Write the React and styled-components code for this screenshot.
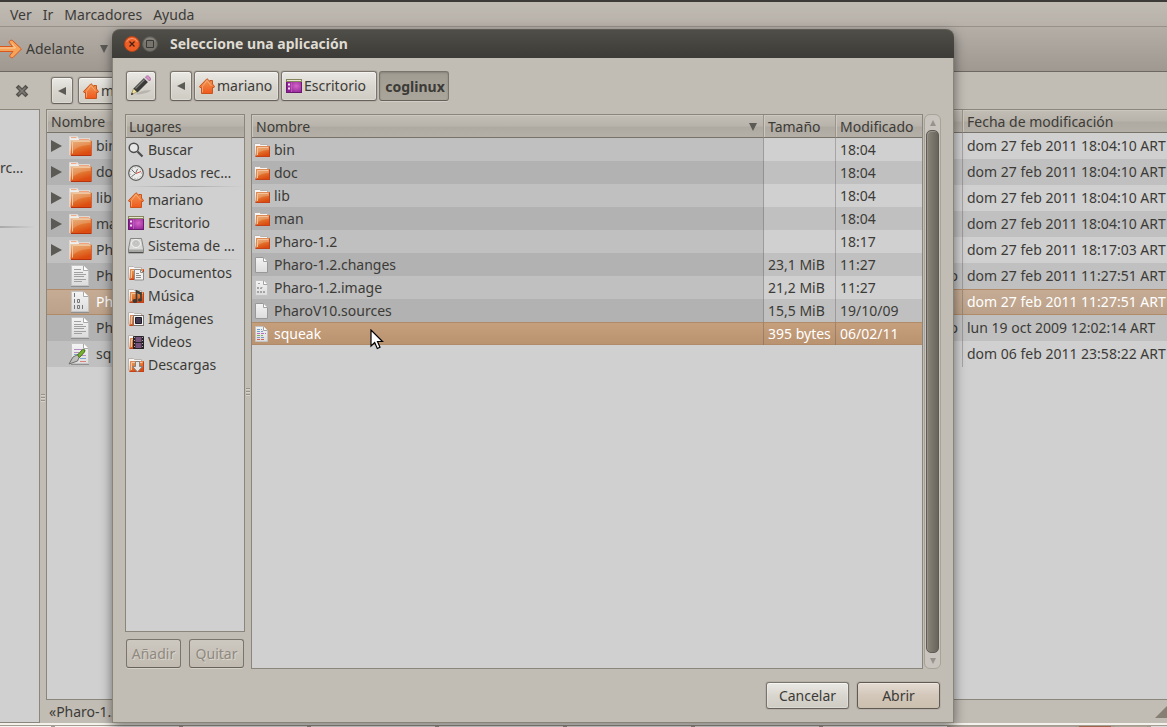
import React from "react";
import styled, { createGlobalStyle, css } from "styled-components";

const ink = "#3c3b37";
const sand = "#c1bcb4";
const frame = "#8b867b";

const Global = createGlobalStyle`
  *, *::before, *::after { box-sizing: border-box; }
  html, body { margin: 0; background: ${sand}; }
  body, button { font-family: "Noto Sans", "Open Sans", sans-serif; font-size: 14px; line-height: 20px; color: ${ink}; }
  button { margin: 0; padding: 0; border: 0; background: none; }
  svg { display: block; flex: none; }
`;

/* ---------- layout of the file manager behind ---------- */
const Desktop = styled.div`
  position: relative;
  display: flex;
  flex-direction: column;
  min-height: 100vh;
  overflow: hidden;
  background: ${sand};
`;
const MenuBar = styled.nav`
  display: flex;
  gap: 11px;
  height: 27px;
  padding: 3px 10px 0;
  border-top: 2px solid #3c3b37;
  border-bottom: 1px solid #98918a;
  background: linear-gradient(#c0bbb3, #b7b1aa);
`;
const MenuItem = styled.button`
  height: 20px;
`;
const Toolbar = styled.div`
  display: flex;
  align-items: center;
  gap: 6px;
  height: 45px;
  border-bottom: 1px solid #6e6862;
  background: linear-gradient(#b4aea7, #9f9891);
`;
const ToolButton = styled.button`
  display: flex;
  align-items: center;
  gap: 4px;
`;
const DropButton = styled.button`
  padding-left: 9px;
`;
const Location = styled.div`
  display: flex;
  align-items: center;
  gap: 5px;
  height: 37px;
  padding-left: 15px;
`;
const CloseSide = styled.button`
  margin-right: 17px;
`;
const Workspace = styled.div`
  display: flex;
  flex: 1;
`;
const SidePanel = styled.div`
  width: 40px;
  padding-top: 48px;
  border-top: 1px solid ${frame};
  border-right: 1px solid ${frame};
  border-bottom: 1px solid ${frame};
  background: #d0d0d0;
`;
const SideRule = styled.hr`
  height: 2px;
  margin: 48px 4px 0 0;
  border: 0;
  background: linear-gradient(90deg, #a9a9a9, #d0d0d0);
`;
const Grip = styled.div`
  display: flex;
  align-items: center;
  justify-content: center;
  width: 6px;
  padding-bottom: ${(p) => p.$lift || 0}px;
`;
const Main = styled.div`
  display: flex;
  flex: 1;
  flex-direction: column;
  min-width: 0;
`;
const ListFrame = styled.div`
  flex: 1;
  min-width: 0;
  border: 1px solid ${frame};
  border-right-width: ${(p) => (p.$open ? 0 : 1)}px;
  background: #d0d0d0;
`;
const StatusBar = styled.div`
  display: flex;
  align-items: center;
  justify-content: space-between;
  height: 23px;
  padding-left: 3px;
`;
const TaskBar = styled.div`
  display: flex;
  gap: 4px;
  height: 4px;
  border-top: 2px solid #f4f1ec;
  background: #a39c90;
`;
const Task = styled.div`
  flex: none;
  width: ${(p) => p.$w || 124}px;
  margin-top: 1px;
  background: ${(p) => p.$c || "#f7f5f2"};
`;

/* ---------- tables ---------- */
const Table = styled.table`
  width: 100%;
  table-layout: fixed;
  border-spacing: 0;
`;
const Col = styled.col`
  width: ${(p) => p.$w}px;
`;
const Th = styled.th`
  height: 23px;
  padding: 2px 4px 0;
  border-bottom: 1px solid #77726a;
  border-right: 1px solid #9a948a;
  background: linear-gradient(#c2bdb5, #b9b4ab 50%, #aea9a1 55%, #b5b0a7);
  box-shadow: inset 1px 1px 0 #ccc7bf;
  font-weight: normal;
  line-height: 20px;
  text-align: left;
  white-space: nowrap;
  &:last-child { border-right: 0; }
`;
const HeadLine = styled.span`
  display: flex;
  align-items: center;
  justify-content: space-between;
  padding-right: 2px;
`;
const Td = styled.td`
  height: ${(p) => p.$h}px;
  padding: 0 4px;
  border-right: 1px solid rgba(90, 86, 80, 0.35);
  line-height: 20px;
  text-align: ${(p) => p.$align || "left"};
  white-space: nowrap;
  background: #d0d0d0;
  &:last-child { border-right: 0; }
`;
const Tr = styled.tr`
  &:nth-child(even) ${Td} { background: #c0c0c0; }
  & ${Td}:first-child { padding-left: 2px; background: #c0c0c0; }
  &:nth-child(even) ${Td}:first-child { background: #b2b2b2; }
  ${(p) =>
    p.$on &&
    css`
      && ${Td}, &&:nth-child(even) ${Td}, && ${Td}:first-child {
        color: #fff;
        background: ${p.$dim
          ? "linear-gradient(#c6ac95, #bba189)"
          : "linear-gradient(#c69f7d, #b99270)"};
        box-shadow: inset 0 1px 0 #b08b69, inset 0 -1px 0 #b08b69;
      }
    `}
`;
const FileName = styled.span`
  display: flex;
  align-items: center;
  gap: 4px;
`;
const Expander = styled.span`
  display: flex;
  flex: none;
  justify-content: center;
  width: 15px;
`;

/* ---------- dialog ---------- */
const Dialog = styled.section`
  position: absolute;
  top: 29px;
  right: 213px;
  bottom: 4px;
  left: 112px;
  display: flex;
  flex-direction: column;
  border: 1px solid #8a8377;
  border-top: 0;
  border-radius: 8px 8px 0 0;
  background: ${sand};
  box-shadow: 0 4px 12px rgba(0, 0, 0, 0.5);
`;
const TitleBar = styled.header`
  display: flex;
  align-items: center;
  gap: 2px;
  height: 29px;
  margin: 0 -1px;
  padding-left: 12px;
  border-top: 1px solid #5d5b54;
  border-radius: 8px 8px 0 0;
  background: linear-gradient(#504e48, #3c3b37);
`;
const Title = styled.h1`
  margin: 0 0 0 10px;
  color: #dfdbd2;
  font-size: 14px;
  line-height: 20px;
`;
const DialogBody = styled.div`
  display: flex;
  flex: 1;
  flex-direction: column;
  gap: 13px;
  padding: 13px 12px;
`;
const PathBar = styled.div`
  display: flex;
  gap: 2px;
  height: 30px;
`;
const Button = styled.button`
  display: flex;
  align-items: center;
  justify-content: center;
  gap: 2px;
  flex: none;
  width: ${(p) => p.$w}px;
  height: ${(p) => p.$h || 30}px;
  border: 1px solid #7a756c;
  border-bottom-color: #66625a;
  border-radius: 3px;
  background: linear-gradient(#ebe9e5, #d9d6cf 50%, #cfccc4);
  box-shadow: inset 0 1px 0 #f5f4f1, inset 0 0 0 1px rgba(255, 255, 255, 0.25), 0 0 0 1px rgba(140, 132, 120, 0.2);
  white-space: nowrap;
  ${(p) =>
    p.$crumb &&
    css`
      justify-content: flex-start;
      padding-left: 4px;
    `}
  ${(p) =>
    p.$pressed &&
    css`
      padding: 2px 0 0 2px;
      font-weight: bold;
      background: linear-gradient(#a19c92, #aba69c);
      box-shadow: inset 0 1px 2px #87827a, 0 1px 0 #d2cdc6;
    `}
  ${(p) =>
    p.$suggested &&
    css`
      background: linear-gradient(#e4dbd2, #d3c7ba 50%, #cbbfae);
      border-color: #5f5a52;
      box-shadow: inset 0 1px 0 #eee7df, 0 0 0 1px rgba(140, 132, 120, 0.2);
    `}
  &:disabled {
    color: #8f897f;
    background: linear-gradient(#cdc8c0, #c1bbb1);
    box-shadow: 0 1px 0 #d5d0c9;
    text-shadow: 1px 1px 0 #dad6cf;
  }
`;
const PencilSlot = styled.div`
  margin: 0 12px 0 1px;
`;
const Panes = styled.div`
  display: flex;
  flex: 1;
`;
const PlacesColumn = styled.div`
  display: flex;
  flex-direction: column;
  width: 120px;
`;
const PlacesFrame = styled.div`
  flex: 1;
  border: 1px solid ${frame};
  background: #d0d0d0;
`;
const PlacesHead = styled.div`
  height: 23px;
  padding: 2px 3px 0;
  border-bottom: 1px solid #77726a;
  background: linear-gradient(#c2bdb5, #b9b4ab 50%, #aea9a1 55%, #b5b0a7);
  box-shadow: inset 1px 1px 0 #ccc7bf;
`;
const PlaceList = styled.ul`
  margin: 0;
  padding: 0;
  list-style: none;
`;
const PlaceItem = styled.li`
  border-top: ${(p) => (p.$group ? "4px solid transparent" : "0")};
  background: ${(p) =>
    p.$group
      ? "linear-gradient(90deg, #d0d0d0, #a8a8a8 50%, #d0d0d0) 0 2px / 100% 1px no-repeat border-box"
      : "none"};
`;
const PlaceButton = styled.button`
  display: flex;
  align-items: center;
  gap: 4px;
  width: 100%;
  height: 23px;
  padding-left: 2px;
  white-space: nowrap;
`;
const PlaceActions = styled.div`
  display: flex;
  justify-content: space-between;
  padding: 7px 1px 1px;
`;
const Scrollbar = styled.div`
  display: flex;
  flex-direction: column;
  align-items: center;
  width: 17px;
  margin-left: 1px;
  border: 1px solid #a8a298;
  border-radius: 6px;
  background: #c9c5be;
`;
const Arrow = styled.div`
  display: flex;
  align-items: center;
  justify-content: center;
  height: 15px;
`;
const Thumb = styled.div`
  flex: 1;
  width: 13px;
  border: 1px solid #5f5b54;
  border-radius: 5px;
  background: linear-gradient(90deg, #8b867a, #7a756b 50%, #68645d);
  box-shadow: inset 1px 1px 0 #98938a;
`;
const Actions = styled.div`
  display: flex;
  justify-content: flex-end;
  gap: 8px;
  padding-right: 1px;
`;
const Pointer = styled.svg`
  position: absolute;
  left: 370px;
  top: 329px;
`;

/* ---------- icons ---------- */
const Defs = () => (
  <svg width="0" height="0" style={{ position: "absolute" }} aria-hidden="true">
    <defs>
      <linearGradient id="orange" x1="0" y1="0" x2="0.4" y2="1">
        <stop offset="0" stopColor="#e2a568" />
        <stop offset="0.5" stopColor="#e37c36" />
        <stop offset="1" stopColor="#dc4c10" />
      </linearGradient>
      <linearGradient id="house" x1="0" y1="0" x2="0" y2="1">
        <stop offset="0" stopColor="#f09a55" />
        <stop offset="1" stopColor="#f0581c" />
      </linearGradient>
      <linearGradient id="paper" x1="0" y1="0" x2="0" y2="1">
        <stop offset="0" stopColor="#f4f4f4" />
        <stop offset="1" stopColor="#dcdcdc" />
      </linearGradient>
      <radialGradient id="purple" cx="0.65" cy="0.5" r="0.6">
        <stop offset="0" stopColor="#d465c8" />
        <stop offset="1" stopColor="#8e1f94" />
      </radialGradient>
    </defs>
  </svg>
);
const BigFolder = () => (
  <svg width="24" height="24" viewBox="0 0 24 24">
    <path d="M1.500 20.500v-18h8l1 2h11v3" fill="#efefee" stroke="#dcd9d6" />
    <path d="M3 3.600h5.500M11 5.500h10" stroke="#f1a47a" />
    <path d="M2 6h2v15H1z" fill="#e9d3c5" />
    <path d="M3.500 6.500h20v14.500h-21z" fill="url(#orange)" />
    <path d="M3 21.500h20.500" stroke="#b5320c" />
    <path d="M4.500 19.500v-12h18" fill="none" stroke="#f3c39a" />
    <path d="M5 8h17.500v3C15 11 9 13 5 17z" fill="#fff" opacity=".16" />
    <path d="M23.500 7v14" stroke="#cf4a18" opacity=".6" />
  </svg>
);
const FolderBody = () => (
  <g>
    <path d="M.5 13.500v-12h5l1 1h7v2" fill="#f7f6f5" stroke="#b8b3ae" />
    <path d="M2 4h14v10.500H1.500z" fill="url(#orange)" />
    <path d="M1.500 14.500H16M15.500 4.500v10" stroke="#c4421a" />
    <path d="M2.500 13.500v-9h12.500" fill="none" stroke="#dc8a55" />
    <path d="M3.500 13V5.500h11" fill="none" stroke="#f4c39a" />
  </g>
);
const SmallFolder = () => (
  <svg width="16" height="16" viewBox="0 0 16 16">
    <FolderBody />
    <path d="M4 6h11v2C10 8 7 9 4 11z" fill="#fff" opacity=".2" />
  </svg>
);
const House = () => (
  <svg width="16" height="16" viewBox="0 0 16 16">
    <path
      d="M8 .7L11 3.500V2.500h2.500V6l2.100 2.600-.6.900h-1.500v6h-11v-6H1L.4 8.600z"
      fill="url(#house)"
      stroke="#c9551d"
    />
    <path d="M3.500 14.500V8.500L8 2.500l4.500 5.500" fill="none" stroke="#f8b68a" opacity=".7" />
  </svg>
);
const DesktopIcon = () => (
  <svg width="16" height="16" viewBox="0 0 16 16">
    <rect x=".5" y="1.500" width="15" height="13" fill="url(#purple)" stroke="#6c1a70" />
    <path d="M0 1h16v3H0z" fill="#86845c" />
    <path d="M1 2.500h14" stroke="#e7e5cf" />
    <path d="M2 5.500h2v2H2zM2 9.500h2v2H2z" fill="#f1dff1" />
    <path d="M5.500 4.500v9.500" stroke="#bb59b8" />
  </svg>
);
const Lens = () => (
  <svg width="16" height="16" viewBox="0 0 16 16">
    <circle cx="5.800" cy="5.800" r="4.600" fill="#e6e6e6" stroke="#4e4e4e" strokeWidth="1.500" />
    <path d="M9.500 9.500l5 5" stroke="#4e4e4e" strokeWidth="2.200" />
  </svg>
);
const Clock = () => (
  <svg width="16" height="16" viewBox="0 0 16 16">
    <circle cx="8" cy="8" r="7.300" fill="#ececea" stroke="#5c5c5a" strokeWidth="1.200" />
    <circle cx="8" cy="8" r="5.500" fill="none" stroke="#a8a8a6" strokeDasharray="1 2" />
    <path d="M3.500 4.500l4 4 2-4.500" fill="none" stroke="#6b6b69" />
    <path d="M8 8.500l5-2" stroke="#d34c3f" />
    <path d="M7 9l-3.500 2.500" stroke="#777" />
  </svg>
);
const Disk = () => (
  <svg width="16" height="16" viewBox="0 0 16 16">
    <path d="M2.500.5h11l2 10.500v4H.5v-4z" fill="#d9d9d8" stroke="#858583" />
    <ellipse cx="8" cy="5.500" rx="4.500" ry="4" fill="#c7c7c5" stroke="#f3f3f2" />
    <circle cx="8" cy="5" r="1.200" fill="#f2f2f2" stroke="#9b9b99" strokeWidth=".6" />
    <path d="M1 11.500h14v3H1z" fill="#a6a6a3" />
    <path d="M1 14.500h14" stroke="#4f4f4d" />
  </svg>
);
const PlaceFolder = ({ children }) => (
  <svg width="16" height="16" viewBox="0 0 16 16">
    <FolderBody />
    {children}
  </svg>
);
const DocsIcon = () => (
  <PlaceFolder>
    <path d="M6.500 4.500h6l3 3v7.500h-9z" fill="#f2f2f1" stroke="#8f8d8a" />
    <path d="M12.500 4.500v3h3M8 8.500h3M8 10.500h5M8 12.500h5" fill="none" stroke="#8f8d8a" />
  </PlaceFolder>
);
const MusicIcon = () => (
  <PlaceFolder>
    <path d="M8.500 12V3L13 5v6.500" fill="none" stroke="#3d3b37" strokeWidth="1.700" />
    <path d="M8 2.500l5.500 2v2.500L8 5z" fill="#3d3b37" />
    <ellipse cx="7" cy="13" rx="2.500" ry="2" fill="#3d3b37" />
    <ellipse cx="12" cy="12" rx="2" ry="1.700" fill="#3d3b37" />
  </PlaceFolder>
);
const PhotosIcon = () => (
  <PlaceFolder>
    <path d="M5.500 4.500h10v10h-10z" fill="#f3f3f3" stroke="#77736e" />
    <path d="M7.500 6.500h6v6h-6z" fill="#433b52" stroke="#1e1b26" />
  </PlaceFolder>
);
const VideoIcon = () => (
  <PlaceFolder>
    <path d="M5.500 2.500h10v12h-10z" fill="#77527b" stroke="#28242b" />
    <path d="M6.500 3v12M14.500 3v12" stroke="#222" strokeWidth="2" />
    <path d="M6.500 3v12M14.500 3v12" stroke="#aaa" strokeDasharray="1 2" />
    <path d="M7 8.500h7" stroke="#241f28" />
  </PlaceFolder>
);
const DownloadIcon = () => (
  <PlaceFolder>
    <path d="M7.500 4.500h4v5h3l-5 5.500-5-5.500h3z" fill="#e4e4e3" stroke="#84807b" />
  </PlaceFolder>
);
const Sheet = ({ kind }) => (
  <svg width="16" height="16" viewBox="0 0 16 16">
    <path d="M1.500.5h8l4 4v11h-12z" fill="url(#paper)" stroke={kind ? "#c3c3c3" : "#989898"} />
    <path d="M9.500.5v4h4" fill="#fff" stroke="#a2a2a2" />
    {kind === "binary" && (
      <path d="M4 3.500h2M3 7.500h2M6.500 7.500h3M3 8.500h6M3 11.500h8M3 12.500h8" stroke="#a4a4a2" strokeDasharray="2 1" />
    )}
    {kind === "script" && (
      <g strokeDasharray="3 1">
        <path d="M3 3.500h5M3 5.500h6" stroke="#6f9fce" />
        <path d="M3 7.500h9" stroke="#b36cb8" />
        <path d="M3 9.500h6" stroke="#7fae63" />
        <path d="M3 11.500h8" stroke="#7a97c8" />
        <path d="M3 13.500h7" stroke="#d0625b" />
      </g>
    )}
  </svg>
);
const BigSheet = ({ kind }) => (
  <svg width="24" height="24" viewBox="0 0 24 24">
    <path d="M3.500 1.500h12l5 5v15h-17z" fill="url(#paper)" stroke="#c4c4c4" />
    <path d="M15.500 1.500v5h5" fill="#fff" stroke="#a8a8a8" />
    <path d="M3 22.500h18" stroke="#8f8f8f" />
    {kind === "text" && (
      <path d="M6 5.500h7M6 8.500h9M6 10.500h12M6 12.500h10M6 15.500h12M6 17.500h8" stroke="#a0a0a0" />
    )}
    {kind === "binary" && (
      <path
        d="M6.500 3v4M6.500 9v4M9.500 9.500h2v3h-2zM6.500 15v4M9.500 15.500h2v3h-2zM14.500 15v4"
        fill="none"
        stroke="#777"
      />
    )}
    {kind === "script" && (
      <g>
        <path d="M6 7.500h8M6 10.500h5M12 13.500h6" stroke="#b48bc4" />
        <path d="M6 12.500h5M12 16.500h6" stroke="#79a9cf" />
        <path d="M12 19.500h6" stroke="#d9837d" />
        <path d="M1 22l4-7 5-2.500 1.500 2L9.500 19z" fill="#bfbfbd" stroke="#6f6f6d" />
        <path d="M9.500 13l5-5.500 2.500.5-.5 2-5 5.500z" fill="#77b32c" stroke="#466f19" />
      </g>
    )}
  </svg>
);
const Tri = ({ dir, w = 9, h = 9, c = "#5c5a55" }) => {
  const d = {
    left: `M${w} 0V${h}L0 ${h / 2}z`,
    right: `M0 0V${h}L${w} ${h / 2}z`,
    down: `M0 0H${w}L${w / 2} ${h}z`,
    up: `M0 ${h}H${w}L${w / 2} 0z`,
  }[dir];
  return (
    <svg width={w} height={h} viewBox={`0 0 ${w} ${h}`}>
      <path d={d} fill={c} />
    </svg>
  );
};
const ForwardIcon = () => (
  <svg width="22" height="20" viewBox="0 0 22 20">
    <path
      d="M-2 7.500h14.500l-3-3.500c-1-1.500 1-3.500 3-2.500l9 8.500-8.500 8.500c-2 1-4-1-3-2.500l3-3.500H-2z"
      fill="#f6a258"
      stroke="#d9561c"
    />
    <path d="M0 9h15.500L12 4.500" fill="none" stroke="#fbd0a2" />
  </svg>
);
const Pencil = () => (
  <svg width="22" height="22" viewBox="0 0 22 22">
    <path d="M5 19.500c6-4 11-5 16-4-2 2-9 4-16 4z" fill="#8d8a84" opacity=".4" />
    <path d="M1.500 19.500l2-6 3.500 3.500z" fill="#f0e096" stroke="#98906a" strokeWidth=".8" />
    <path d="M3.500 13.500L14 3l4 4L7.500 17.500z" fill="#3b3b39" />
    <path d="M5.500 13.500l9-9" stroke="#83837f" strokeWidth="1.200" />
    <path d="M14 3l1.500-1.500 4 4L18 7z" fill="#d5d5d2" />
    <path d="M15.500 2c1-1.500 3-1.500 4 0s1.500 2.500 0 4z" fill="#dd8fd0" stroke="#9c5f93" strokeWidth=".8" />
    <path d="M1 20l.8-2.400 1.600 1.600z" fill="#222" />
  </svg>
);
const Cross = () => (
  <svg width="14" height="14" viewBox="0 0 14 14">
    <path d="M3.500 3.500l7 7M10.500 3.500l-7 7" stroke="#57544f" strokeWidth="4" strokeLinecap="square" />
    <path d="M3.500 3.500l7 7M10.500 3.500l-7 7" stroke="#7d7973" strokeWidth="1.500" />
  </svg>
);
const WindowButton = ({ close }) => (
  <svg width="16" height="16" viewBox="0 0 16 16">
    <circle cx="8" cy="8" r="7.500" fill={close ? "#ee5f26" : "#76746d"} stroke={close ? "#b3441a" : "#5b5953"} />
    <path d="M2.500 6a6 6 0 0 1 11 0" fill="none" stroke="#fff" opacity={close ? 0.35 : 0.15} />
    {close ? (
      <path d="M5.500 5.500l5 5M10.500 5.500l-5 5" stroke="#452010" strokeWidth="1.200" />
    ) : (
      <path d="M4.500 4.500h7v7h-7z" fill="none" stroke="#3a3935" />
    )}
  </svg>
);
const GripDots = () => (
  <svg width="4" height="8" viewBox="0 0 4 8">
    <path d="M0 .5h4M0 3.500h4M0 6.500h4" stroke="#989288" />
    <path d="M0 1.500h4M0 4.500h4M0 7.500h4" stroke="#d6d1ca" />
  </svg>
);

/* ---------- data ---------- */
const windowRows = [
  ["folder", "bin", "", "dom 27 feb 2011 18:04:10 ART"],
  ["folder", "doc", "", "dom 27 feb 2011 18:04:10 ART"],
  ["folder", "lib", "", "dom 27 feb 2011 18:04:10 ART"],
  ["folder", "man", "", "dom 27 feb 2011 18:04:10 ART"],
  ["folder", "Pharo-1.2", "", "dom 27 feb 2011 18:17:03 ART"],
  ["text", "Pharo-1.2.changes", "desconocido", "dom 27 feb 2011 11:27:51 ART"],
  ["binary", "Pharo-1.2.image", "", "dom 27 feb 2011 11:27:51 ART"],
  ["text", "PharoV10.sources", "desconocido", "lun 19 oct 2009 12:02:14 ART"],
  ["script", "squeak", "", "dom 06 feb 2011 23:58:22 ART"],
];
const dialogRows = [
  ["folder", "bin", "", "18:04"],
  ["folder", "doc", "", "18:04"],
  ["folder", "lib", "", "18:04"],
  ["folder", "man", "", "18:04"],
  ["folder", "Pharo-1.2", "", "18:17"],
  ["", "Pharo-1.2.changes", "23,1 MiB", "11:27"],
  ["binary", "Pharo-1.2.image", "21,2 MiB", "11:27"],
  ["", "PharoV10.sources", "15,5 MiB", "19/10/09"],
  ["script", "squeak", "395 bytes", "06/02/11"],
];
const places = [
  [Lens, "Buscar"],
  [Clock, "Usados rec…"],
  [House, "mariano", true],
  [DesktopIcon, "Escritorio"],
  [Disk, "Sistema de …"],
  [DocsIcon, "Documentos", true],
  [MusicIcon, "Música"],
  [PhotosIcon, "Imágenes"],
  [VideoIcon, "Videos"],
  [DownloadIcon, "Descargas"],
];

const FileManager = () => (
  <>
    <MenuBar>
      {["Ver", "Ir", "Marcadores", "Ayuda"].map((m) => (
        <MenuItem key={m}>{m}</MenuItem>
      ))}
    </MenuBar>
    <Toolbar>
      <ToolButton>
        <ForwardIcon />
        Adelante
      </ToolButton>
      <DropButton aria-label="Historial">
        <Tri dir="down" w={8} h={8} />
      </DropButton>
    </Toolbar>
    <Location>
      <CloseSide aria-label="Cerrar panel">
        <Cross />
      </CloseSide>
      <Button $w={22} $h={27} aria-label="Anterior">
        <Tri dir="left" w={8} h={8} />
      </Button>
      <Button $w={85} $h={27} $crumb>
        <House />
        mariano
      </Button>
    </Location>
    <Workspace>
      <SidePanel>
        rc…
        <SideRule />
      </SidePanel>
      <Grip $lift={36}>
        <GripDots />
      </Grip>
      <Main>
        <ListFrame $open>
          <Table>
            <colgroup>
              <Col $w={300} />
              <col />
              <Col $w={204} />
            </colgroup>
            <thead>
              <tr>
                <Th>Nombre</Th>
                <Th />
                <Th>Fecha de modificación</Th>
              </tr>
            </thead>
            <tbody>
              {windowRows.map(([kind, name, type, date]) => (
                <Tr key={name} $on={kind === "binary"} $dim>
                  <Td $h={26}>
                    <FileName>
                      <Expander>{kind === "folder" && <Tri dir="right" w={11} h={12} />}</Expander>
                      {kind === "folder" ? <BigFolder /> : <BigSheet kind={kind} />}
                      {name}
                    </FileName>
                  </Td>
                  <Td $h={26} $align="right">{type}</Td>
                  <Td $h={26}>{date}</Td>
                </Tr>
              ))}
            </tbody>
          </Table>
        </ListFrame>
        <StatusBar>
          «Pharo-1.2.image»
          <svg width="12" height="12" viewBox="0 0 12 12">
            <path d="M12 0v12H0z" fill="#857f74" />
          </svg>
        </StatusBar>
      </Main>
    </Workspace>
    <TaskBar>
      <Task $w={51} />
      <Task />
      <Task />
      <Task />
      <Task />
      <Task />
      <Task />
      <Task />
      <Task $c="#a8a29b" />
      <Task $w={32} $c="#a1664c" />
      <Task $w={32} $c="#aea798" />
      <Task $w={20} $c="#d9d8d6" />
    </TaskBar>
  </>
);

const OpenDialog = () => (
  <Dialog role="dialog" aria-labelledby="dialog-title">
    <TitleBar>
      <button aria-label="Cerrar">
        <WindowButton close />
      </button>
      <button aria-label="Maximizar">
        <WindowButton />
      </button>
      <Title id="dialog-title">Seleccione una aplicación</Title>
    </TitleBar>
    <DialogBody>
      <PathBar>
        <PencilSlot>
          <Button $w={30} aria-label="Escribir ruta">
            <Pencil />
          </Button>
        </PencilSlot>
        <Button $w={22} aria-label="Anterior">
          <Tri dir="left" w={8} h={8} />
        </Button>
        <Button $w={85} $crumb>
          <House />
          mariano
        </Button>
        <Button $w={96} $crumb>
          <DesktopIcon />
          Escritorio
        </Button>
        <Button $w={70} $pressed aria-pressed="true">
          coglinux
        </Button>
      </PathBar>
      <Panes>
        <PlacesColumn>
          <PlacesFrame>
            <PlacesHead>Lugares</PlacesHead>
            <PlaceList>
              {places.map(([Icon, label, group]) => (
                <PlaceItem key={label} $group={group}>
                  <PlaceButton>
                    <Icon />
                    {label}
                  </PlaceButton>
                </PlaceItem>
              ))}
            </PlaceList>
          </PlacesFrame>
          <PlaceActions>
            <Button $w={55} $h={29} disabled>
              Añadir
            </Button>
            <Button $w={55} $h={29} disabled>
              Quitar
            </Button>
          </PlaceActions>
        </PlacesColumn>
        <Grip>
          <GripDots />
        </Grip>
        <ListFrame>
          <Table>
            <colgroup>
              <col />
              <Col $w={72} />
              <Col $w={86} />
            </colgroup>
            <thead>
              <tr>
                <Th>
                  <HeadLine>
                    Nombre
                    <Tri dir="down" w={8} h={8} />
                  </HeadLine>
                </Th>
                <Th>Tamaño</Th>
                <Th>Modificado</Th>
              </tr>
            </thead>
            <tbody>
              {dialogRows.map(([kind, name, size, date]) => (
                <Tr key={name} $on={name === "squeak"}>
                  <Td $h={23}>
                    <FileName>
                      {kind === "folder" ? <SmallFolder /> : <Sheet kind={kind} />}
                      {name}
                    </FileName>
                  </Td>
                  <Td $h={23}>{size}</Td>
                  <Td $h={23}>{date}</Td>
                </Tr>
              ))}
            </tbody>
          </Table>
        </ListFrame>
        <Scrollbar>
          <Arrow>
            <Tri dir="up" w={6} h={6} c="#98938a" />
          </Arrow>
          <Thumb />
          <Arrow>
            <Tri dir="down" w={6} h={6} c="#98938a" />
          </Arrow>
        </Scrollbar>
      </Panes>
      <Actions>
        <Button $w={83} $h={27}>
          Cancelar
        </Button>
        <Button $w={83} $h={27} $suggested>
          Abrir
        </Button>
      </Actions>
    </DialogBody>
  </Dialog>
);

export default function App() {
  return (
    <Desktop>
      <Global />
      <Defs />
      <FileManager />
      <OpenDialog />
      <Pointer width="14" height="21" viewBox="0 0 14 21">
        <path
          d="M1 1v16l3.700-3.500 2.600 6 2.700-1.200-2.500-5.800H12.500z"
          fill="#fff"
          stroke="#000"
          strokeWidth="1.200"
        />
      </Pointer>
    </Desktop>
  );
}
